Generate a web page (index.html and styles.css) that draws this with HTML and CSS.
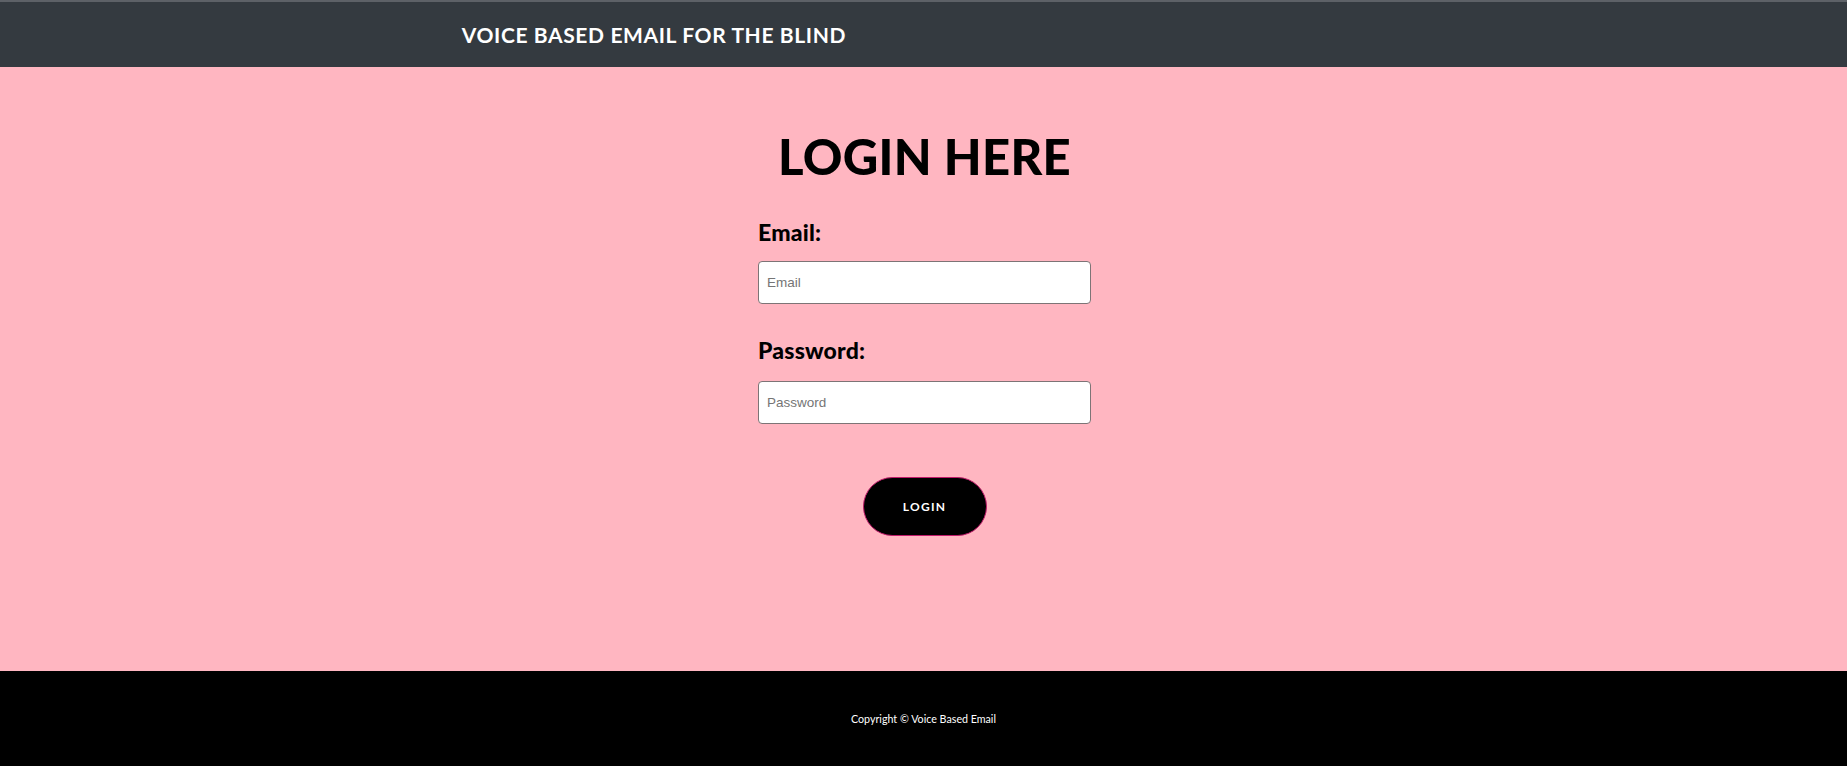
FILE: index.html
```html
<!DOCTYPE html>
<html lang="en">
<head>
<meta charset="utf-8">
<title>Voice Based Email for the Blind</title>
<link rel="stylesheet" href="styles.css">
</head>
<body>
<header class="topbar">
  <div class="brand">VOICE BASED EMAIL FOR THE BLIND</div>
</header>
<main class="main">
  <h1 class="title">LOGIN HERE</h1>
  <form class="form">
    <label class="label label-email" for="email">Email:</label>
    <input class="field field-email" id="email" type="text" placeholder="Email">
    <label class="label label-pass" for="pass">Password:</label>
    <input class="field field-pass" id="pass" type="password" placeholder="Password">
    <button class="btn" type="button">LOGIN</button>
  </form>
</main>
<footer class="footer">
  <p class="copy">Copyright © Voice Based Email</p>
</footer>
</body>
</html>
```
FILE: styles.css
```css
* { box-sizing: border-box; }
html, body { margin: 0; padding: 0; }
body {
  font-family: "Lato", "Liberation Sans", sans-serif;
  background: #000;
  height: 766px;
  overflow: hidden;
}
.topbar {
  height: 67px;
  background: #343a40;
  border-top: 2px solid #5d6167;
  padding-left: 25%;
  display: flex;
  align-items: center;
}
.brand {
  color: #fff;
  font-weight: 700;
  font-size: 21px;
  letter-spacing: 0.62px;
  line-height: 21px;
}
.main {
  height: 604px;
  background: #ffb6c1;
  padding-top: 65px;
  display: flex;
  flex-direction: column;
  align-items: center;
}
.title {
  margin: 0 0 0 2px;
  font-size: 49px;
  line-height: 48px;
  font-weight: 900;
  color: #000;
  letter-spacing: 0.3px;
}
.form {
  width: 333px;
  margin-left: 2px;
  display: flex;
  flex-direction: column;
}
.label {
  font-size: 23px;
  line-height: 22px;
  font-weight: 900;
  color: #000;
  letter-spacing: 0.2px;
}
.label-email { margin-top: 41px; }
.label-pass { margin-top: 35px; }
.field {
  height: 43px;
  border: 1px solid #7d7476;
  border-radius: 4px;
  background: #fff;
  padding: 0 8px;
  font-family: "Liberation Sans", Arial, sans-serif;
  font-size: 13.5px;
  color: #000;
}
.field::placeholder { color: #757575; }
.field-email { margin-top: 18px; }
.field-pass { margin-top: 20px; }
.btn {
  align-self: center;
  margin-top: 53px;
  width: 124px;
  height: 59px;
  border-radius: 30px;
  border: 1px solid #c0196a;
  background: #000;
  color: #fff;
  font-family: "Lato", sans-serif;
  font-weight: 700;
  font-size: 12px;
  letter-spacing: 1.3px;
  padding: 0;
}
.footer {
  height: 95px;
  background: #000;
  display: flex;
  align-items: center;
  justify-content: center;
}
.copy {
  margin: 0;
  color: #fff;
  font-size: 10.7px;
}
```
